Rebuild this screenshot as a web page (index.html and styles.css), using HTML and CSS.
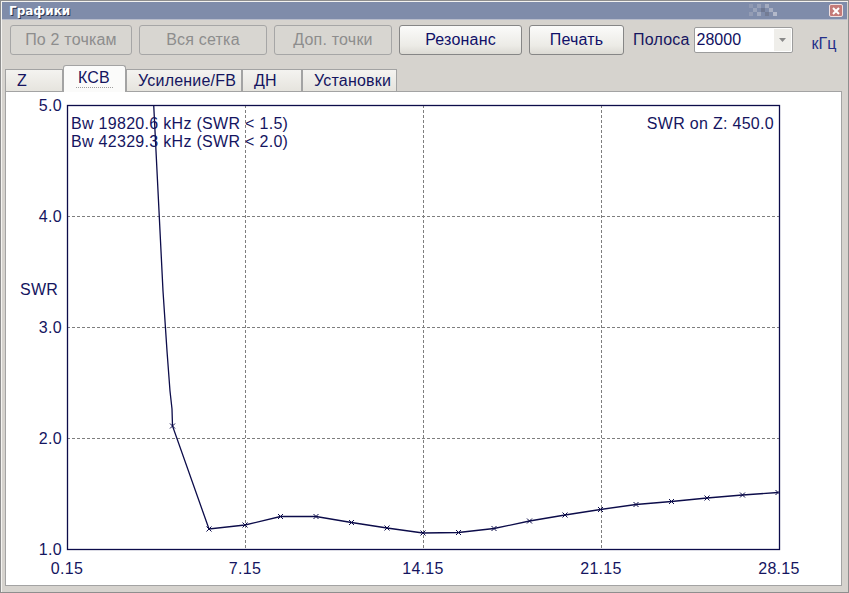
FILE: index.html
```html
<!DOCTYPE html>
<html lang="ru">
<head>
  <meta charset="UTF-8">
  <title>Графики</title>
  <link rel="stylesheet" href="styles.css">
</head>
<body>
  <div class="window">
    <div class="titlebar">
      <span class="title">Графики</span>
      <svg class="checker" width="30" height="13" viewBox="0 0 30 13">
        <rect x="2" y="0" width="4" height="4" fill="#8f99b2"/>
        <rect x="10" y="0" width="4" height="4" fill="#98a1b8"/>
        <rect x="18" y="0" width="4" height="4" fill="#a3abbf"/>
        <rect x="6" y="4" width="4" height="4" fill="#9aa3b9"/>
        <rect x="14" y="4" width="4" height="4" fill="#6f7891"/>
        <rect x="22" y="4" width="4" height="4" fill="#a7aec2"/>
        <rect x="2" y="8" width="4" height="4" fill="#939cb4"/>
        <rect x="10" y="8" width="4" height="4" fill="#a0a8bd"/>
        <rect x="18" y="8" width="4" height="4" fill="#737c94"/>
        <rect x="26" y="8" width="4" height="4" fill="#b3b9ca"/>
      </svg>
      <span class="close">
        <svg width="8" height="8" viewBox="0 0 8 8"><path d="M1 1 L7 7 M7 1 L1 7" stroke="#fff" stroke-width="2"/></svg>
      </span>
    </div>

    <div class="toolbar">
      <button class="btn w1" disabled>По 2 точкам</button>
      <button class="btn w2" disabled>Вся сетка</button>
      <button class="btn w3" disabled>Доп. точки</button>
      <button class="btn w4">Резонанс</button>
      <button class="btn w5">Печать</button>
      <span class="band-label">Полоса</span>
      <div class="combo">
        <span class="combo-value">28000</span>
        <span class="combo-arrow">
          <svg width="7" height="4" viewBox="0 0 7 4"><path d="M0 0 H7 L3.5 4 Z" fill="#8a8a8a"/></svg>
        </span>
      </div>
      <span class="unit">кГц</span>
    </div>

    <div class="tabs">
      <div class="tab t-z">Z</div>
      <div class="tab t-swr active"><span class="focus">КСВ</span></div>
      <div class="tab t-gain">Усиление/FB</div>
      <div class="tab t-dn">ДН</div>
      <div class="tab t-set">Установки</div>
    </div>

    <div class="panel">
      <svg class="chart" width="835" height="494" viewBox="6 91 835 494">
        <defs>
          <clipPath id="plot"><rect x="67" y="104" width="712" height="444"/></clipPath>
        </defs>
        <g class="grid">
          <line x1="245.5" y1="104" x2="245.5" y2="548"/>
          <line x1="423.5" y1="104" x2="423.5" y2="548"/>
          <line x1="601.5" y1="104" x2="601.5" y2="548"/>
          <line x1="67" y1="215.5" x2="779" y2="215.5"/>
          <line x1="67" y1="326.5" x2="779" y2="326.5"/>
          <line x1="67" y1="437.5" x2="779" y2="437.5"/>
        </g>
        <rect class="frame" x="67.5" y="104.5" width="712" height="444"/>

        <g clip-path="url(#plot)">
          <polyline class="curve" points="153.5,100 156,150 159,210 163,290 167,350 170,390 172,408 172.5,425 209,528 245,524 280.5,515.5 316,515.5 351.5,521.5 387,527 423,532 458.5,531.5 494,527.5 529.5,520 565,514 600.5,508.5 636,503.5 671.5,500.5 707,497 742.5,494 778,491.5"/>
          <g class="marks">
            <path d="M170 422.5 l5 5 m0 -5 l-5 5"/>
            <path d="M206.5 525.5 l5 5 m0 -5 l-5 5"/>
            <path d="M242.5 521.5 l5 5 m0 -5 l-5 5"/>
            <path d="M278 513 l5 5 m0 -5 l-5 5"/>
            <path d="M313.5 513 l5 5 m0 -5 l-5 5"/>
            <path d="M349 519 l5 5 m0 -5 l-5 5"/>
            <path d="M384.5 524.5 l5 5 m0 -5 l-5 5"/>
            <path d="M420.5 529.5 l5 5 m0 -5 l-5 5"/>
            <path d="M456 529 l5 5 m0 -5 l-5 5"/>
            <path d="M491.5 525 l5 5 m0 -5 l-5 5"/>
            <path d="M527 517.5 l5 5 m0 -5 l-5 5"/>
            <path d="M562.5 511.5 l5 5 m0 -5 l-5 5"/>
            <path d="M598 506 l5 5 m0 -5 l-5 5"/>
            <path d="M633.5 501 l5 5 m0 -5 l-5 5"/>
            <path d="M669 498 l5 5 m0 -5 l-5 5"/>
            <path d="M704.5 494.5 l5 5 m0 -5 l-5 5"/>
            <path d="M740 491.5 l5 5 m0 -5 l-5 5"/>
            <path d="M775.5 489 l5 5 m0 -5 l-5 5"/>
          </g>
        </g>

        <g class="ylabels">
          <text x="62" y="110">5.0</text>
          <text x="62" y="221">4.0</text>
          <text x="62" y="332">3.0</text>
          <text x="62" y="443">2.0</text>
          <text x="62" y="554">1.0</text>
        </g>
        <g class="xlabels">
          <text x="67" y="573">0.15</text>
          <text x="245" y="573">7.15</text>
          <text x="423" y="573">14.15</text>
          <text x="601" y="573">21.15</text>
          <text x="779" y="573">28.15</text>
        </g>
        <text class="label" x="20" y="294">SWR</text>
        <text class="label" x="71" y="128">Bw 19820.6 kHz (SWR &lt; 1.5)</text>
        <text class="label" x="71" y="146">Bw 42329.3 kHz (SWR &lt; 2.0)</text>
        <text class="label end" x="774" y="128">SWR on Z: 450.0</text>
      </svg>
    </div>
  </div>
</body>
</html>
```

FILE: styles.css
```css
html, body {
  margin: 0;
  padding: 0;
  background: #d6d3ce;
}
body {
  font-family: "Liberation Sans", Arial, sans-serif;
  color: #15155f;
}
.window {
  width: 849px;
  height: 593px;
  box-sizing: border-box;
  border: 1px solid #8e8e8e;
  padding: 1px;
  background: #d6d3ce;
  display: flex;
  flex-direction: column;
  box-shadow: inset 1px 1px 0 #f4f3f0;
}
.titlebar {
  height: 17px;
  background: #7f8caa;
  display: flex;
  align-items: center;
  padding-left: 7px;
  padding-right: 4px;
  border-bottom: 1px solid #b7bccb;
}
.title {
  color: #fff;
  font-family: "DejaVu Sans", Verdana, sans-serif;
  font-weight: bold;
  font-size: 12px;
  text-shadow: 1px 1px 0 #2c3550;
  flex: 1;
}
.checker {
  margin-right: 52px;
}
.close {
  width: 12px;
  height: 11px;
  background: #c47a78;
  border: 1px solid #f1e0e0;
  border-radius: 2px;
  display: flex;
  align-items: center;
  justify-content: center;
}
.toolbar {
  display: flex;
  align-items: center;
  padding: 4px 0 0 8px;
  height: 31px;
}
.btn {
  height: 30px;
  margin-right: 7px;
  font-family: "Liberation Sans", Arial, sans-serif;
  font-size: 16px;
  letter-spacing: 0.2px;
  color: #101068;
  background: linear-gradient(#fbfbfa, #ecebe6 70%, #dcdad4);
  border: 1px solid #868686;
  border-radius: 3px;
  padding: 0;
}
.btn:disabled {
  color: #8d8d8d;
  background: #d8d6d1;
  border-color: #a6a6a6;
}
.w1 { width: 122px; }
.w2 { width: 128px; }
.w3 { width: 118px; }
.w4 { width: 123px; }
.w5 { width: 95px; }
.band-label {
  font-size: 16px;
  letter-spacing: 0.2px;
  margin-left: 2px;
  margin-right: 4px;
}
.combo {
  width: 97px;
  height: 24px;
  border: 1px solid #9c9c9c;
  border-radius: 2px;
  background: #fff;
  display: flex;
  align-items: center;
}
.combo-value {
  flex: 1;
  font-size: 16px;
  padding-left: 2px;
  color: #101060;
}
.combo-arrow {
  width: 17px;
  height: 22px;
  background: #efeeea;
  display: flex;
  align-items: center;
  justify-content: center;
  margin-right: 1px;
}
.unit {
  font-size: 16px;
  margin-left: 19px;
  margin-top: 8px;
  color: #25308a;
}
.tabs {
  display: flex;
  align-items: flex-end;
  margin-top: 10px;
  padding-left: 3px;
  height: 26px;
  position: relative;
  z-index: 1;
}
.tab {
  height: 22px;
  box-sizing: border-box;
  border: 1px solid #a3a3a3;
  border-bottom: none;
  background: linear-gradient(#f4f3f0, #e6e4de);
  font-size: 16px;
  letter-spacing: 0.2px;
  line-height: 22px;
  padding-left: 11px;
  color: #15155f;
}
.tab.active {
  height: 27px;
  background: #fbfbfa;
  border-radius: 3px 3px 0 0;
  line-height: 23px;
  margin-bottom: -1px;
  padding-left: 12px;
}
.focus {
  border-bottom: 1px dotted #a0a0a0;
  padding: 0 3px 1px 2px;
}
.t-z { width: 58px; }
.t-swr { width: 63px; }
.t-gain { width: 116px; }
.t-dn { width: 60px; }
.t-set { width: 95px; }
.panel {
  flex: 1;
  margin: 0 5px 5px 3px;
  border: 1px solid #a3a3a3;
  background: #fff;
  overflow: hidden;
}
.chart {
  display: block;
}
.grid line {
  stroke: #7e7e7e;
  stroke-width: 1;
  stroke-dasharray: 3 2;
}
.frame {
  fill: none;
  stroke: #0c0c4a;
  stroke-width: 1.3;
}
.curve {
  fill: none;
  stroke: #0c0c4a;
  stroke-width: 1.3;
}
.marks path {
  stroke: #0c0c4a;
  stroke-width: 1;
  fill: none;
}
.chart text {
  font-family: "Liberation Sans", Arial, sans-serif;
  font-size: 16px;
  letter-spacing: 0.3px;
  fill: #15155f;
}
.ylabels text {
  text-anchor: end;
}
.xlabels text {
  text-anchor: middle;
}
.chart .end {
  text-anchor: end;
}
```
